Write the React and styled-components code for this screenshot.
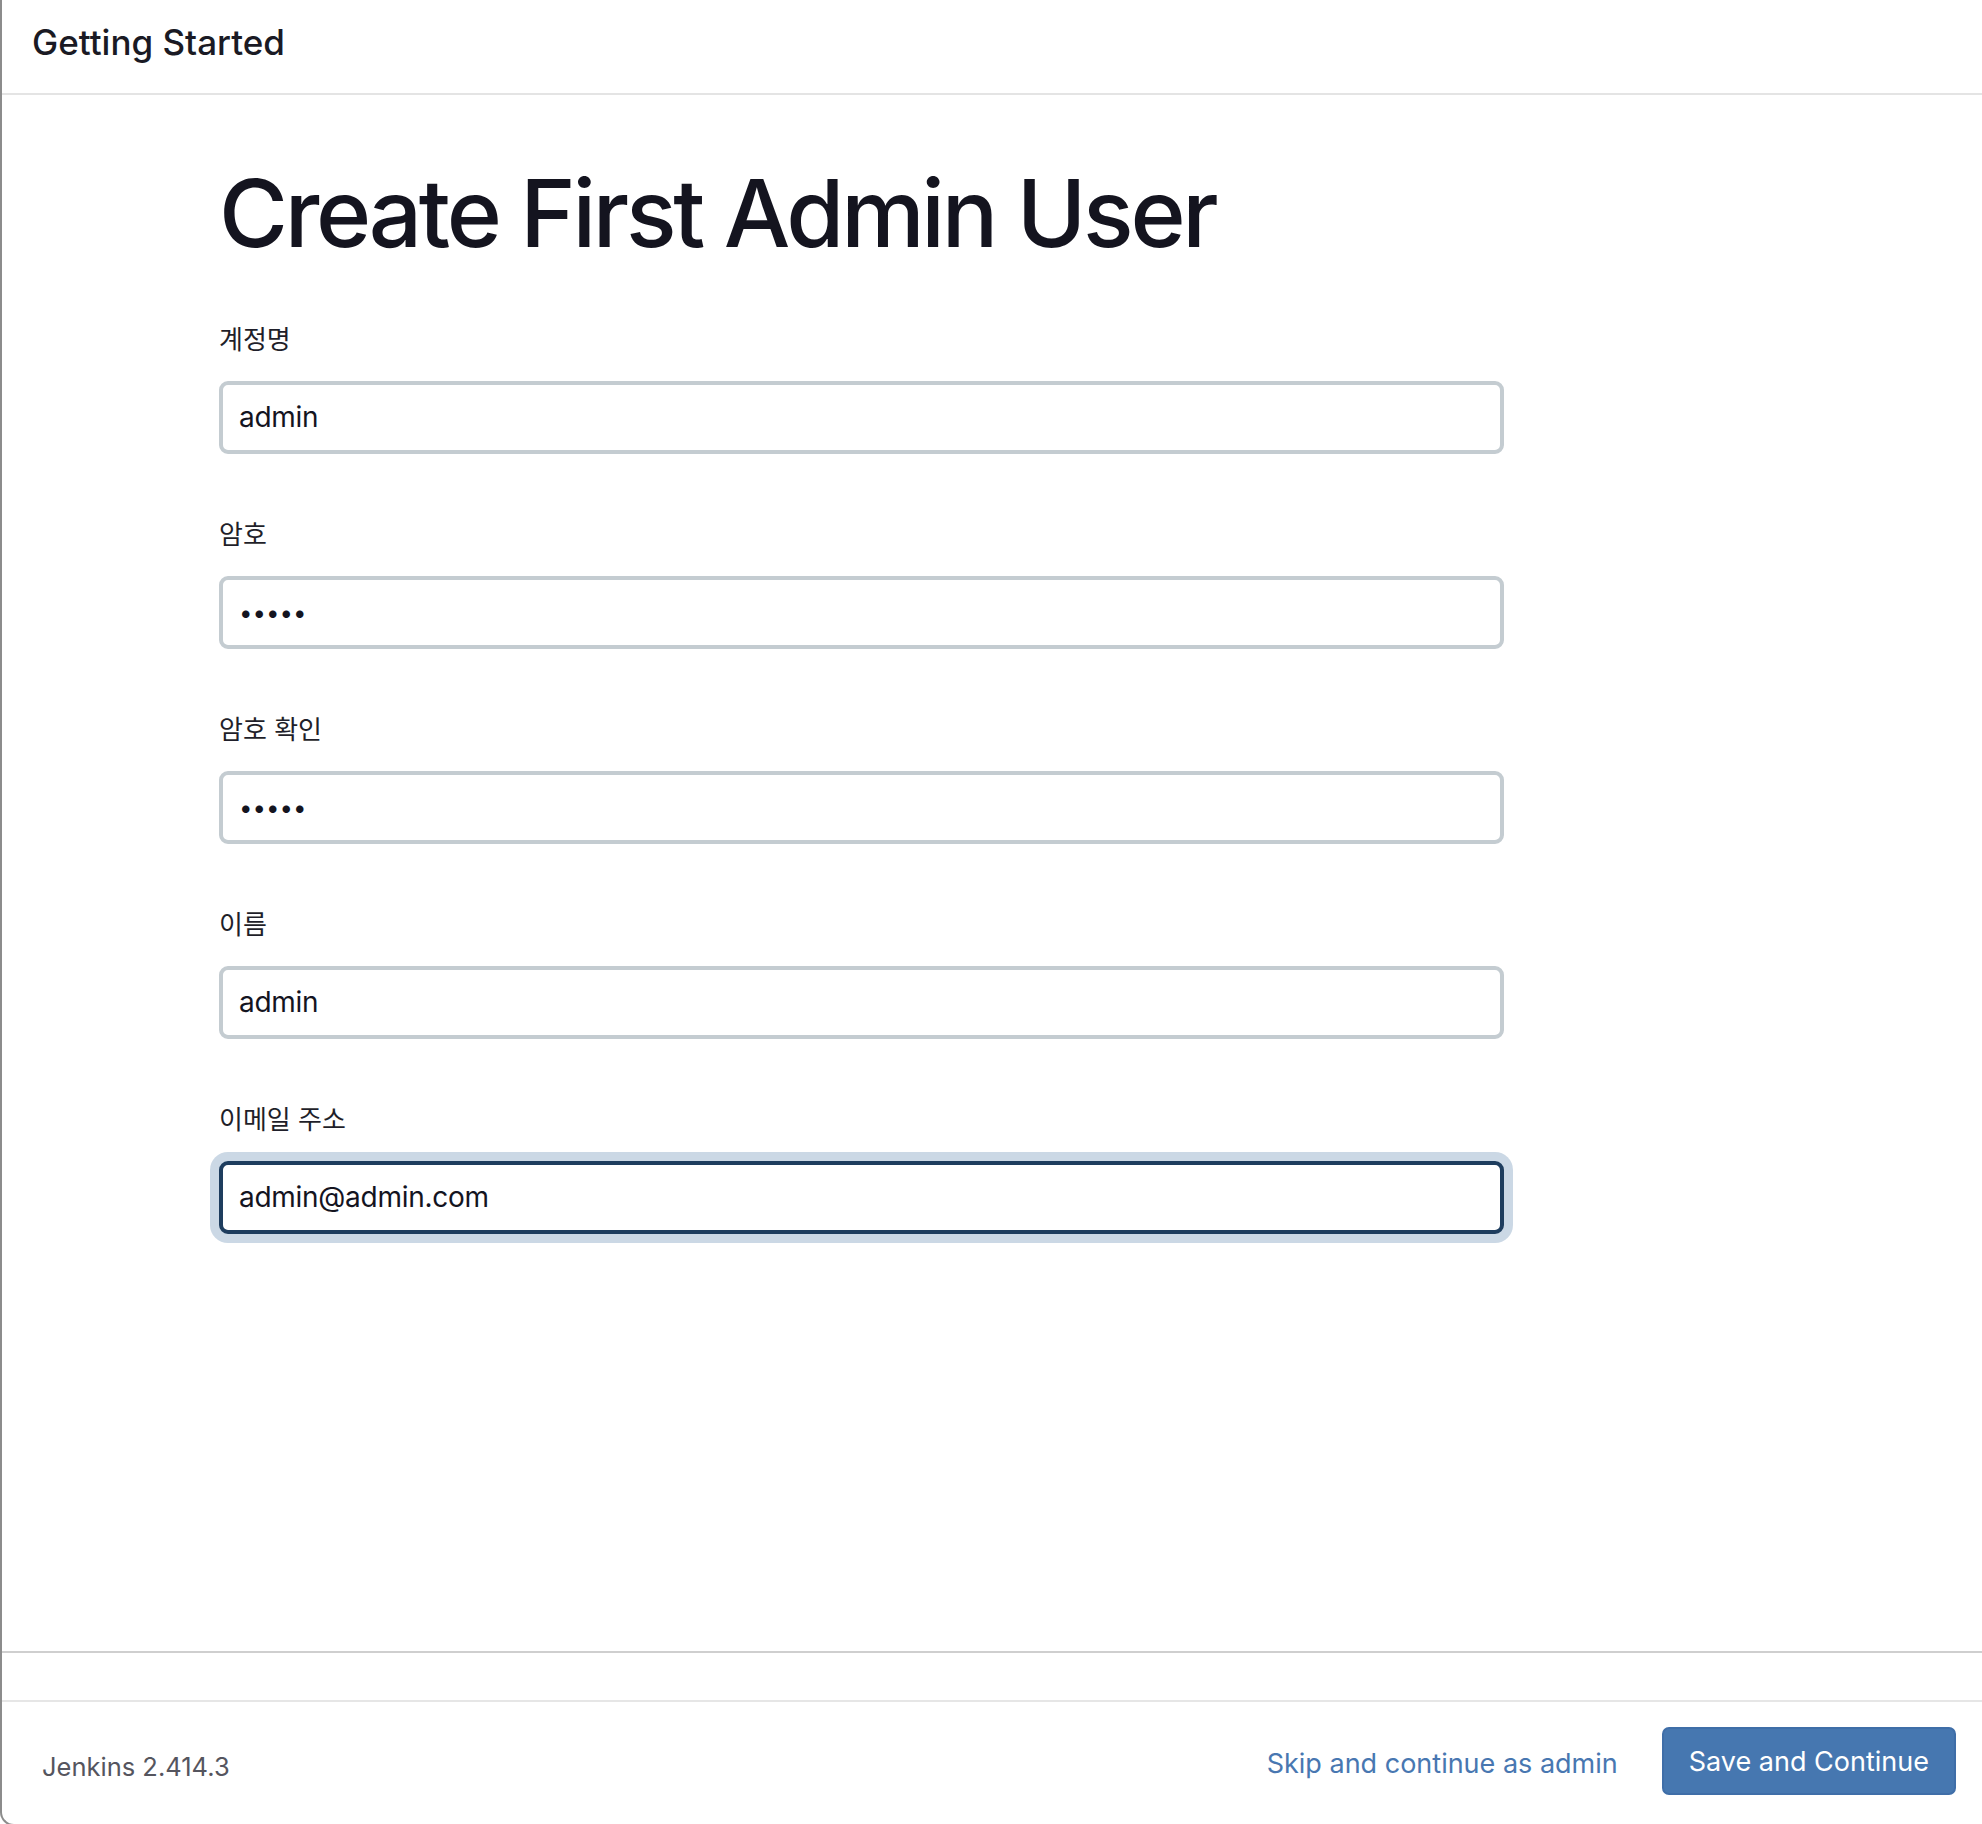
import React, { useEffect, useRef } from 'react';
import styled, { createGlobalStyle } from 'styled-components';

const GlobalStyle = createGlobalStyle`
    html, body {
        margin: 0;
        padding: 0;
        background: #ffffff;
        overflow: hidden;
    }
    body {
        font-family: Inter, "Noto Sans CJK KR", sans-serif;
        color: #14141f;
    }
`

const Frame = styled.div`
    display: flex;
    flex-direction: column;
    height: 1826px;
    box-sizing: border-box;
    border-left: 2px solid #8c8c8c;
    border-bottom: 2px solid #8c8c8c;
    border-bottom-left-radius: 14px;
    background: #fff;
`

const Header = styled.div`
    height: 95px;
    flex: none;
    display: flex;
    align-items: center;
    padding-left: 30px;
    border-bottom: 2px solid #e4e4e4;
    font-size: 35px;
    font-weight: 500;
    color: #1a1a24;
    padding-bottom: 10px;
    box-sizing: border-box;
`

const Body = styled.div`
    flex: 1;
    padding: 62px 0 0 217px;
`

const Title = styled.h1`
    margin: 0 0 52px;
    font-size: 94px;
    line-height: 1.2;
    font-weight: 500;
    letter-spacing: -0.035em;
    color: #14141f;
`

const Field = styled.div`
    display: flex;
    flex-direction: column;
    width: 1285px;
    margin-bottom: 63px;
`

const Label = styled.label`
    font-size: 26px;
    line-height: 36px;
    color: #1f1f2a;
    margin-bottom: 23px;
`

const Input = styled.input`
    box-sizing: border-box;
    height: 73px;
    width: 100%;
    padding: 0 16px;
    border: 4px solid #c4ccd1;
    border-radius: 9px;
    font-family: Inter, "Noto Sans CJK KR", sans-serif;
    font-size: ${p => (p.type === 'password' ? '24px' : '28px')};
    letter-spacing: ${p => (p.type === 'password' ? '0' : '-0.01em')};
    color: #14141f;
    background: #fff;
    outline: none;
    caret-color: #14141f;
    border-color: ${p => (p.$active ? '#1e3d5e' : '#c4ccd1')};
    box-shadow: ${p => (p.$active ? '0 0 0 9px #cbd8e5' : 'none')};
`

const Band = styled.div`
    flex: none;
    height: 47px;
    border-top: 2px solid #cfcfcf;
`

const Footer = styled.div`
    flex: none;
    height: 124px;
    box-sizing: border-box;
    border-top: 2px solid #e6e6e6;
    display: flex;
    align-items: center;
    padding: 0 26px 0 40px;
`

const Version = styled.div`
    flex: 1;
    font-size: 25.5px;
    color: #55555e;
    padding-top: 6px;
`

const SkipLink = styled.a`
    font-size: 27px;
    color: #4877b1;
    text-decoration: none;
    margin-right: 44px;
    cursor: pointer;
`

const SaveButton = styled.button`
    height: 68px;
    padding: 0 25px;
    font-family: Inter, sans-serif;
    font-size: 27px;
    color: #fff;
    background: #4677b0;
    border: 2px solid #3f6ea8;
    border-radius: 7px;
    cursor: pointer;
    margin-bottom: 4px;
`

const fields = [
    { label: '계정명', value: 'admin', type: 'text' },
    { label: '암호', value: '12345', type: 'password' },
    { label: '암호 확인', value: '12345', type: 'password' },
    { label: '이름', value: 'admin', type: 'text' },
    { label: '이메일 주소', value: 'admin@admin.com', type: 'text', active: true },
]

export default function App() {
    const emailRef = useRef(null);

    useEffect(() => {
        const el = emailRef.current;
        if (el) {
            el.focus();
            el.setSelectionRange(el.value.length, el.value.length);
        }
    }, []);

    return (
        <>
            <GlobalStyle />
            <Frame>
                <Header>Getting Started</Header>
                <Body>
                    <Title>Create First Admin User</Title>
                    {fields.map(f => (
                        <Field key={f.label}>
                            <Label>{f.label}</Label>
                            <Input
                                type={f.type}
                                defaultValue={f.value}
                                $active={f.active}
                                ref={f.active ? emailRef : null}
                            />
                        </Field>
                    ))}
                </Body>
                <Band />
                <Footer>
                    <Version>Jenkins 2.414.3</Version>
                    <SkipLink>Skip and continue as admin</SkipLink>
                    <SaveButton>Save and Continue</SaveButton>
                </Footer>
            </Frame>
        </>
    )
}
